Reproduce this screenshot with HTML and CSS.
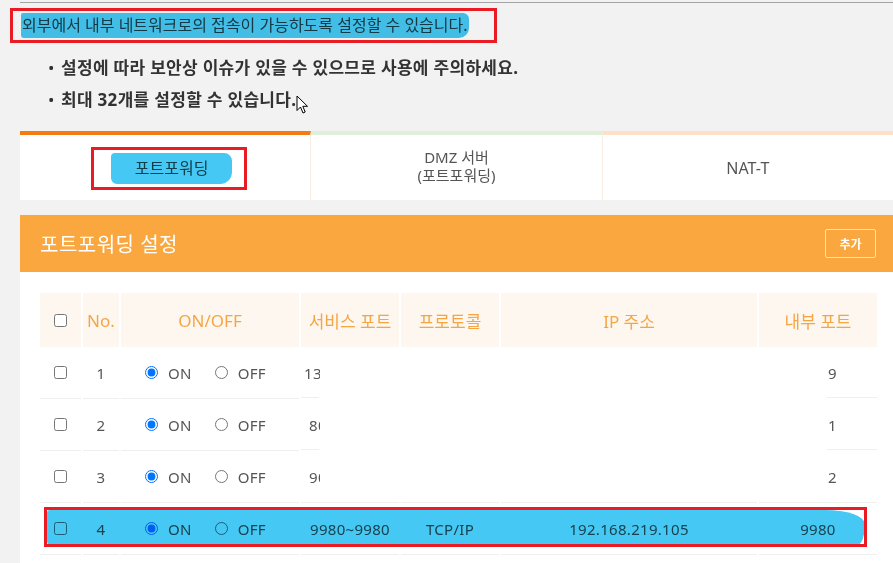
FILE: index.html
```html
<!DOCTYPE html>
<html>
	<head>
		<meta charset="UTF-8">
		<title>포트포워딩</title>
		<link rel="stylesheet" href="styles.css">
	</head>
	<body>
		<div class="rule"></div>
		<div class="intro"><span class="hl">외부에서 내부 네트워크로의 접속이 가능하도록 설정할 수 있습니다.</span></div>
		<ul class="notes">
			<li>설정에 따라 보안상 이슈가 있을 수 있으므로 사용에 주의하세요.</li>
			<li>최대 32개를 설정할 수 있습니다.</li>
			<svg class="cursor" width="13" height="20" viewBox="0 0 13 20"><path d="M1 1 L1 15.5 L4.5 12 L7 18 L9.2 17 L6.8 11.3 L11.5 11.3 Z" fill="#fff" stroke="#000" stroke-width="1" stroke-linejoin="round"/></svg>
		</ul>

		<div class="tabs">
			<div class="tab on"><span class="mark"><span class="hl2">포트포워딩</span></span></div>
			<div class="tab t2">DMZ 서버<br>(포트포워딩)</div>
			<div class="tab t3">NAT-T</div>
		</div>

		<div class="panel">
			<div class="panel-head">
				<h2>포트포워딩 설정</h2>
				<button class="btn-add">추가</button>
			</div>
			<div class="panel-body">
				<div class="grid head">
					<div class="th"><input type="checkbox"></div>
					<div class="th">No.</div>
					<div class="th">ON/OFF</div>
					<div class="th">서비스 포트</div>
					<div class="th">프로토콜</div>
					<div class="th">IP 주소</div>
					<div class="th">내부 포트</div>
				</div>

				<div class="grid">
					<div class="td"><input type="checkbox"></div>
					<div class="td">1</div>
					<div class="td onoff"><label><input type="radio" name="r1" checked>ON</label><label><input type="radio" name="r1">OFF</label></div>
					<div class="td peek seg-l"><span class="p1">13389~13389</span></div>
					<div class="td blank"></div>
					<div class="td blank"></div>
					<div class="td last seg-r">9</div>
				</div>
				<div class="grid">
					<div class="td"><input type="checkbox"></div>
					<div class="td">2</div>
					<div class="td onoff"><label><input type="radio" name="r2" checked>ON</label><label><input type="radio" name="r2">OFF</label></div>
					<div class="td peek seg-l"><span class="p2">8081~8081</span></div>
					<div class="td blank"></div>
					<div class="td blank"></div>
					<div class="td last seg-r">1</div>
				</div>
				<div class="grid">
					<div class="td"><input type="checkbox"></div>
					<div class="td">3</div>
					<div class="td onoff"><label><input type="radio" name="r3" checked>ON</label><label><input type="radio" name="r3">OFF</label></div>
					<div class="td peek"><span class="p2">9002~9002</span></div>
					<div class="td"></div>
					<div class="td"></div>
					<div class="td last">2</div>
				</div>
				<div class="grid marked">
					<div class="td"><input type="checkbox"></div>
					<div class="td">4</div>
					<div class="td onoff"><label><input type="radio" name="r4" checked>ON</label><label><input type="radio" name="r4">OFF</label></div>
					<div class="td">9980~9980</div>
					<div class="td">TCP/IP</div>
					<div class="td">192.168.219.105</div>
					<div class="td">9980</div>
					<span class="brush"></span>
					<span class="redbox"></span>
				</div>
			</div>
		</div>
	</body>
</html>
```

FILE: styles.css
```css
*{margin:0;padding:0;box-sizing:border-box;}
ul{list-style:none;}
body{background:#f2f2f2;font-family:"Noto Sans","Noto Sans CJK KR",sans-serif;color:#555;width:893px;height:563px;overflow:hidden;}

.rule{margin:2px 0 0 20px;border-top:1px solid #a3a3a3;}
.intro{display:inline-block;margin:5px 0 0 10px;width:487px;height:35px;border:3px solid #e91c24;padding:2px 0 0 9px;}
.hl{display:inline-block;height:25px;line-height:25px;font-size:16px;color:#4a4a4a;padding-right:1px;position:relative;}
.hl:before{content:"";position:absolute;left:-1px;right:0;top:0;bottom:0;background:#45c8f3;mix-blend-mode:multiply;border-radius:2px 6px 10px 3px;}

.notes{position:relative;margin:9px 0 0 0;padding-left:48px;}
.notes li{font-size:17px;font-weight:bold;color:#333;line-height:32px;letter-spacing:0.3px;}
.notes li:before{content:"•";display:inline-block;width:13px;font-weight:normal;}
.cursor{position:absolute;left:296px;top:43px;}

.tabs{display:flex;margin:15px 0 15px 20px;height:69px;}
.tab{flex:1;background:#fff;border-top:4px solid #fde0c6;border-right:1px solid #f7ece2;display:flex;align-items:center;justify-content:center;text-align:center;font-size:16px;line-height:18px;color:#555;}
.tab.on{border-top-color:#f47b12;padding-top:1px;}
.tab.t2{border-top-color:#e0efd9;padding-bottom:3px;font-size:15px;}
.tab.t3{border-right:0;}
.mark{display:inline-block;border:3px solid #e91c24;padding:3px 12px 3px 17px;margin-left:8px;}
.hl2{display:inline-block;height:31px;line-height:31px;padding:0 24px;position:relative;color:#3f4f4f;}
.hl2:before{content:"";position:absolute;left:0;right:0;top:0;bottom:0;background:#45c8f3;mix-blend-mode:multiply;border-radius:4px 8px 12px 6px;}

.panel{margin-left:20px;background:#fff;height:349px;}
.panel-head{height:57px;background:#f9a73e;display:flex;align-items:center;justify-content:space-between;padding:0 17px 0 20px;}
.panel-head h2{font-size:20px;font-weight:normal;color:#fff;letter-spacing:0.5px;}
.btn-add{width:51px;height:29px;border:1px solid #fde2bf;border-radius:2px;background:transparent;color:#fff;font-family:"Noto Sans CJK KR",sans-serif;font-size:12px;font-weight:bold;}
.panel-body{padding:21px 16px 0 20px;}

.grid{display:grid;grid-template-columns:41px 36px 178px 98px 98px 256px 118px;column-gap:2px;}
.th{height:54px;background:#fdf7f0;display:flex;align-items:center;justify-content:center;font-size:17px;color:#f6a545;}
.td{height:52px;border-bottom:1px solid #efefef;display:flex;align-items:center;justify-content:center;font-size:15px;letter-spacing:0.3px;color:#555;}
input[type=checkbox]{width:13px;height:13px;margin:0;}
.onoff{justify-content:flex-start;padding-left:24px;}
.onoff label{display:flex;align-items:center;margin-right:23px;}
.onoff input{width:13px;height:13px;margin:0 10px 0 0;}

.peek{justify-content:flex-start;}
.peek span{display:inline-block;overflow:hidden;white-space:nowrap;}
.p1{margin-left:3px;width:16px;}
.p2{margin-left:8px;width:11px;}
.td.blank{border-bottom-color:transparent;}
.td.seg-l{border-bottom-color:transparent;background:linear-gradient(#efefef,#efefef) left bottom/18px 1px no-repeat;}
.td.seg-r{border-bottom-color:transparent;background:linear-gradient(#efefef,#efefef) right bottom/50px 1px no-repeat;}
.td.last{justify-content:flex-start;padding-left:69px;}

.marked{position:relative;}
.brush{position:absolute;left:7px;top:7px;width:818px;height:35px;background:#45c8f3;mix-blend-mode:multiply;border-radius:3px 40px 8px 4px/3px 14px 20px 4px;}
.redbox{position:absolute;left:4px;top:4px;width:823px;height:40px;border:3px solid #e91c24;}
```
